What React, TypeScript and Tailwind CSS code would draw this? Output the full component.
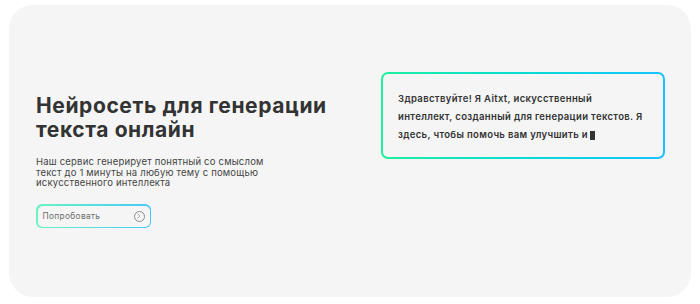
import { ChevronRight } from "lucide-react";

const font = { fontFamily: "Inter, 'Noto Sans', sans-serif" };

export default function App() {
  return (
    <div className="w-[700px] h-[304px] bg-white pt-[5px] pl-[9px]" style={font}>
      <section className="w-[682px] h-[292px] rounded-[24px] bg-[#f5f5f5] flex justify-between pl-[27px] pr-[26px]">
        <div className="pt-[89px]">
          <h1 className="text-[21px] leading-[24px] font-bold text-[#333] tracking-[0.6px]">
            Нейросеть для генерации
            <br />
            текста онлайн
          </h1>
          <p className="mt-[15px] w-[240px] text-[9.5px] leading-[10.7px] text-[#444] tracking-[0.2px]">
            Наш сервис генерирует понятный со смыслом текст до 1 минуты на любую тему с помощью
            искусственного интеллекта
          </p>
          <div className="mt-[15px] w-[115px] h-[24px] rounded-[6px] p-[1.5px] bg-linear-to-r from-[#6cf2c2] to-[#45c9f7]">
            <button className="w-full h-full rounded-[5px] bg-[#f5f5f5] flex items-center justify-between pl-[5px] pr-[5px]">
              <span className="text-[8.3px] text-[#6b6b6b] tracking-[0.35px]">Попробовать</span>
              <span className="w-[11px] h-[11px] rounded-full border border-[#8a8a8a] flex items-center justify-center">
                <ChevronRight size={8} strokeWidth={2} className="text-[#8a8a8a]" />
              </span>
            </button>
          </div>
        </div>
        <div className="pt-[67px]">
          <div className="w-[284px] h-[87px] rounded-[7px] p-[2px] bg-linear-to-r from-[#1ef0a0] to-[#18c3ff]">
            <div className="w-full h-full rounded-[5px] bg-[#f5f5f5] pl-[15px] pt-[16px] text-[9.5px] leading-[18px] font-semibold text-[#333] tracking-[0.35px]">
              <div className="whitespace-nowrap">Здравствуйте! Я Aitxt, искусственный</div>
              <div className="whitespace-nowrap">интеллект, созданный для генерации текстов. Я</div>
              <div className="whitespace-nowrap flex items-center">
                здесь, чтобы помочь вам улучшить и
                <span className="inline-block ml-[2px] w-[5px] h-[9px] bg-[#333]" />
              </div>
            </div>
          </div>
        </div>
      </section>
    </div>
  );
}
